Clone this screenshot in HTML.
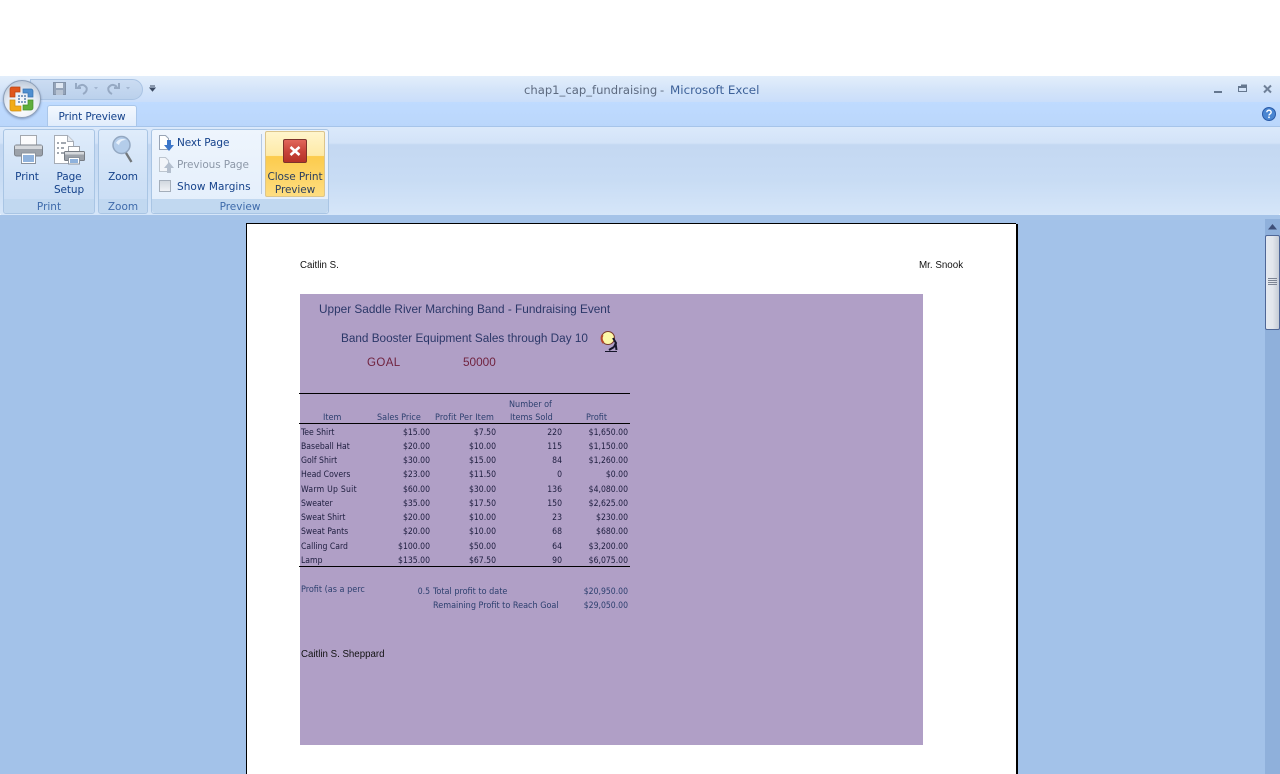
<!DOCTYPE html>
<html><head><meta charset="utf-8">
<style>
html,body{margin:0;padding:0;background:#fff;}
#r{position:relative;width:1280px;height:774px;overflow:hidden;background:#fff;font-family:"DejaVu Sans","Liberation Sans",sans-serif;}
#r div,#r svg{position:absolute;}
.t{white-space:nowrap;line-height:14px;}
.rb{font-size:10.5px;color:#15428b;letter-spacing:-.1px;text-align:center;line-height:13px;}
.gl{top:199px;height:14px;background:#c1d8f0;border-radius:0 0 3px 3px;font-size:10.5px;line-height:16px;color:#3e6aaa;text-align:center;}
.grp{top:129px;height:85px;border:1px solid #a9c5e4;border-radius:3px;background:linear-gradient(#dfecfb,#cfe1f6 60%,#c8dcf4);box-sizing:border-box;}
.c{font-family:"DejaVu Sans Condensed","DejaVu Sans",sans-serif;font-size:8.6px;color:#1d1d3e;height:12px;line-height:12px;white-space:nowrap;}
.n{text-align:right;width:70px;}
.h{color:#2c3f6e;font-size:9px;}
.n.h{font-size:8.6px;}
.a{font-family:"Liberation Sans",sans-serif;white-space:nowrap;}
</style></head><body><div id="r">

<!-- title bar -->
<div style="left:0;top:76px;width:1280px;height:26px;background:linear-gradient(#e3eefb,#d5e5f9 50%,#cadefa);"></div>
<div style="left:30px;top:79px;width:113px;height:21px;border-radius:0 11px 11px 0;background:linear-gradient(#cbdcf2,#bbd1ec);border:1px solid #a9c3e3;box-sizing:border-box;"></div>
<div class="t" style="left:524px;top:83px;font-size:11.6px;color:#5d6a80;">chap1_cap_fundraising</div>
<div class="t" style="left:660px;top:83px;font-size:11.6px;color:#5d6a80;">-</div>
<div class="t" style="left:670px;top:83px;font-size:11.9px;color:#3d6199;">Microsoft Excel</div>

<!-- QAT icons -->
<svg style="left:50px;top:80px" width="110" height="18" viewBox="0 0 110 18">
<rect x="3.500" y="2.500" width="12" height="12" fill="#94a3b8" stroke="#8292a8"/><rect x="6" y="3" width="7" height="5" fill="#dfe7f2"/><rect x="6" y="10" width="7" height="5" fill="#b7c3d3"/>
<path d="M33 14c4-2 5-6 2-8-2-2-5-1-7 1M26 3v5h5" fill="none" stroke="#96a9c3" stroke-width="2"/>
<path d="M44 7l4 0-2 2.500z" fill="#a3b6d0"/>
<path d="M62 14c-4-2-5-6-2-8 2-2 5-1 7 1M69 3v5h-5" fill="none" stroke="#96a9c3" stroke-width="2"/>
<path d="M76 7l4 0-2 2.500z" fill="#a3b6d0"/>
<path d="M100 6h5M100 8l5 0-2.500 3z" fill="#3b4a63" stroke="#3b4a63" stroke-width="1"/>
</svg>

<!-- window controls -->
<svg style="left:1205px;top:80px" width="75" height="18" viewBox="0 0 75 18">
<rect x="9" y="11" width="8" height="2" fill="#65778f"/>
<rect x="33.500" y="6.500" width="8" height="5" fill="none" stroke="#65778f"/><rect x="34" y="6" width="8" height="2" fill="#65778f"/><rect x="36" y="4.500" width="6" height="1.500" fill="#65778f"/>
<path d="M59 5.500l7 7M66 5.500l-7 7" stroke="#6f8098" stroke-width="2"/>
</svg>

<!-- tab strip -->
<div style="left:0;top:102px;width:1280px;height:25px;background:linear-gradient(#bfdbff,#bad6fb);"></div>
<div style="left:47px;top:105px;width:90px;height:23px;background:linear-gradient(#f3f8fe,#dfebfb);border:1px solid #a9c6ea;border-bottom:none;border-radius:3px 3px 0 0;box-sizing:border-box;"></div>
<div class="t rb" style="left:47px;top:109px;width:90px;color:#15428b;line-height:15px;padding-top:1px;">Print Preview</div>
<svg style="left:1262px;top:107px" width="14" height="14" viewBox="0 0 14 14"><circle cx="7" cy="7" r="6.500" fill="#4a86d2" stroke="#2a5ba8"/><path d="M4.800 5.200c0-2.600 4.400-2.600 4.400 0 0 1.700-2.200 1.700-2.200 3.300" fill="none" stroke="#fff" stroke-width="1.400"/><rect x="6.200" y="9.500" width="1.600" height="1.600" fill="#fff"/></svg>

<!-- ribbon body -->
<div style="left:0;top:126px;width:1280px;height:90px;background:linear-gradient(#dbe9fb 0,#d3e3f8 18%,#c4d8f2 20%,#c8dcf4 60%,#d6e6f9 100%);border-top:1px solid #a6c4ea;border-radius:0 0 3px 3px;box-sizing:border-box;"></div>
<div style="left:0;top:215px;width:1280px;height:5px;background:#a5c3e8;"></div>

<div class="grp" style="left:3px;width:92px;"></div><div class="gl" style="left:4px;width:90px;">Print</div>
<div class="grp" style="left:98px;width:50px;"></div><div class="gl" style="left:99px;width:48px;">Zoom</div>
<div class="grp" style="left:151px;width:178px;background:linear-gradient(#eef5fd,#e3eefb);"></div><div class="gl" style="left:152px;width:176px;">Preview</div>

<!-- print icon -->
<svg style="left:13px;top:133px" width="32" height="32" viewBox="0 0 32 32">
<rect x="7.500" y="2.500" width="16" height="10" fill="#fbfbfc" stroke="#a2a7ae"/>
<rect x="1.500" y="12" width="28" height="11" rx="2" fill="#9ca2aa" stroke="#7d838b"/>
<rect x="2" y="12.500" width="27" height="3.500" fill="#d5d8dc"/>
<rect x="8.500" y="20" width="14" height="10.500" fill="#fff" stroke="#8c949e"/>
<rect x="10" y="22" width="11" height="7" fill="#8fb2dc"/>
</svg>
<!-- page setup icon -->
<svg style="left:53px;top:133px" width="34" height="32" viewBox="0 0 34 32">
<path d="M1.500 2.500h13l6 6v22h-19z" fill="#fff" stroke="#a6acb5"/>
<path d="M14.500 2.500v6h6" fill="#e5e9ee" stroke="#a6acb5"/>
<path d="M4 10h2M4 15h2M4 20h2M8 10h5M8 15h3M8 20h3" stroke="#6a7380" stroke-width="1.300"/>
<rect x="15.500" y="13.500" width="11" height="6" fill="#fff" stroke="#9aa0a8"/>
<rect x="11.500" y="18.500" width="20" height="9" rx="1" fill="#9ca2aa" stroke="#767c84"/>
<rect x="12" y="19" width="19" height="2.500" fill="#d5d8dc"/>
<rect x="15.500" y="24.500" width="11" height="6.500" fill="#fff" stroke="#8c949e"/><rect x="17" y="26" width="8" height="4" fill="#8fb2dc"/>
</svg>
<!-- zoom icon -->
<svg style="left:108px;top:133px" width="30" height="32" viewBox="0 0 30 32">
<circle cx="13.500" cy="12" r="8.500" fill="#b4cdea" stroke="#93a8c2" stroke-width="1.500"/>
<path d="M8 10c2-4 7-5 10-3-3 0-6 1-7 5z" fill="#e8f1fb"/>
<path d="M18 20l5.500 9" stroke="#72777a" stroke-width="2.300"/>
</svg>

<div class="t rb" style="left:7px;top:171px;width:40px;">Print</div>
<div class="rb" style="left:49px;top:171px;width:40px;">Page<br>Setup</div>
<div class="t rb" style="left:102px;top:171px;width:42px;">Zoom</div>

<!-- preview small buttons -->
<svg style="left:157px;top:134px" width="18" height="18" viewBox="0 0 18 18"><path d="M2.500 1.500h6l3 3v11h-9z" fill="#fff" stroke="#98a4b5"/><path d="M10 6h4v5h3l-5 6-5-6h3z" fill="#3c76c9"/></svg>
<svg style="left:157px;top:156px" width="18" height="18" viewBox="0 0 18 18"><path d="M2.500 1.500h6l3 3v11h-9z" fill="#f2f5f9" stroke="#bcc5cf"/><path d="M12 6l5 6h-3v5h-4v-5H7z" fill="#b4bfce"/></svg>
<div style="left:159px;top:180px;width:12px;height:12px;box-sizing:border-box;background:linear-gradient(#d2d8df,#f0f2f5);border:1px solid #a4aeba;"></div>
<div class="t rb" style="left:177px;top:137px;">Next Page</div>
<div class="t rb" style="left:177px;top:159px;color:#8d98a8;">Previous Page</div>
<div class="t rb" style="left:177px;top:181px;letter-spacing:.05px;">Show Margins</div>
<div style="left:261px;top:134px;width:1px;height:60px;background:#b5c9e2;"></div>

<!-- close button -->
<div style="left:265px;top:131px;width:60px;height:66px;box-sizing:border-box;border:1px solid #dcc58c;border-radius:2px;background:linear-gradient(#fff5cc 0,#feeaa6 37%,#fccb4c 38%,#fedd80 100%);"></div>
<div style="left:283px;top:139px;width:24px;height:24px;box-sizing:border-box;border:1px solid #7d332b;border-radius:2px;background:linear-gradient(#e1665a 0,#c9453a 50%,#b53227 100%);"></div>
<svg style="left:283px;top:139px" width="24" height="24" viewBox="0 0 24 24"><path d="M7.500 8l9 8M16.500 8l-9 8" stroke="#fff" stroke-width="2.600"/></svg>
<div class="rb" style="left:265px;top:171px;width:60px;color:#2b3f5f;">Close Print<br>Preview</div>

<!-- workspace -->
<div style="left:0;top:220px;width:1280px;height:554px;background:#a3c2e9;"></div>
<div style="left:246px;top:223px;width:770px;height:560px;background:#fff;border:1px solid #000;border-right:none;box-sizing:border-box;"></div>
<div style="left:1016px;top:224px;width:2px;height:550px;background:#000;"></div>

<!-- scrollbar -->
<div style="left:1265px;top:219px;width:15px;height:555px;background:#8fb0db;"></div>
<svg style="left:1265px;top:220px" width="15" height="16" viewBox="0 0 15 16"><path d="M3 9.500l4.500-5.500 4.500 5.500z" fill="#3f4f78"/></svg>
<div style="left:1265px;top:235px;width:15px;height:95px;box-sizing:border-box;border:1px solid #4f6797;border-radius:2px;background:linear-gradient(90deg,#e5e9f0,#e2e6ec 50%,#c6ccd6);"></div>
<svg style="left:1265px;top:277px" width="15" height="10" viewBox="0 0 15 10"><path d="M3 1.500h9M3 3.500h9M3 5.500h9M3 7.500h9" stroke="#7c8493" stroke-width="1"/></svg>

<!-- page content -->
<div class="a t" style="left:300px;top:259px;font-size:9.700px;color:#111;">Caitlin S.</div>
<div class="a t" style="left:919px;top:259px;font-size:9.800px;color:#111;">Mr. Snook</div>
<div style="left:300px;top:294px;width:623px;height:451px;background:#b09fc6;"></div>

<div class="a t" style="left:319px;top:302px;font-size:11.800px;color:#2b3768;">Upper Saddle River Marching Band - Fundraising Event</div>
<div class="a t" style="left:341px;top:332px;font-size:11.750px;color:#2b3768;">Band Booster Equipment Sales through Day 10</div>
<div class="a t" style="left:367px;top:356px;font-size:11.500px;letter-spacing:.4px;color:#70233f;">GOAL</div>
<div class="a t" style="left:463px;top:355px;font-size:11.800px;color:#70233f;">50000</div>
<svg style="left:599px;top:329px" width="21" height="24" viewBox="0 0 21 24">
<circle cx="9" cy="9" r="6.500" fill="#fdf8a8" stroke="#7a3b2c"/><path d="M3.500 6a7 7 0 0 0 1 8" fill="none" stroke="#b5482e" stroke-width="2.200"/>
<path d="M14 9l3 5-2 4M16.500 14l1 7M15 18l-5 3" stroke="#16162a" stroke-width="2" fill="none"/>
<path d="M6 22.500h12" stroke="#16162a" stroke-width="1"/>
</svg>

<div style="left:299px;top:393px;width:331px;height:1px;background:#000;"></div>
<div style="left:299px;top:423px;width:331px;height:1px;background:#000;"></div>
<div style="left:299px;top:566px;width:331px;height:1px;background:#000;"></div>

<div class="c h" style="left:323px;top:412px;">Item</div>
<div class="c h" style="left:377px;top:412px;">Sales Price</div>
<div class="c h" style="left:435px;top:412px;letter-spacing:.1px;">Profit Per Item</div>
<div class="c h" style="left:509px;top:399px;">Number of</div>
<div class="c h" style="left:510px;top:412px;">Items Sold</div>
<div class="c h" style="left:586px;top:412px;">Profit</div>

<div class="c" style="left:301px;top:427px;">Tee Shirt</div><div class="c n" style="left:360px;top:427px;">$15.00</div><div class="c n" style="left:426px;top:427px;">$7.50</div><div class="c n" style="left:492px;top:427px;">220</div><div class="c n" style="left:558px;top:427px;">$1,650.00</div>
<div class="c" style="left:301px;top:441px;">Baseball Hat</div><div class="c n" style="left:360px;top:441px;">$20.00</div><div class="c n" style="left:426px;top:441px;">$10.00</div><div class="c n" style="left:492px;top:441px;">115</div><div class="c n" style="left:558px;top:441px;">$1,150.00</div>
<div class="c" style="left:301px;top:455px;">Golf Shirt</div><div class="c n" style="left:360px;top:455px;">$30.00</div><div class="c n" style="left:426px;top:455px;">$15.00</div><div class="c n" style="left:492px;top:455px;">84</div><div class="c n" style="left:558px;top:455px;">$1,260.00</div>
<div class="c" style="left:301px;top:469px;">Head Covers</div><div class="c n" style="left:360px;top:469px;">$23.00</div><div class="c n" style="left:426px;top:469px;">$11.50</div><div class="c n" style="left:492px;top:469px;">0</div><div class="c n" style="left:558px;top:469px;">$0.00</div>
<div class="c" style="left:301px;top:484px;letter-spacing:.25px;">Warm Up Suit</div><div class="c n" style="left:360px;top:484px;">$60.00</div><div class="c n" style="left:426px;top:484px;">$30.00</div><div class="c n" style="left:492px;top:484px;">136</div><div class="c n" style="left:558px;top:484px;">$4,080.00</div>
<div class="c" style="left:301px;top:498px;">Sweater</div><div class="c n" style="left:360px;top:498px;">$35.00</div><div class="c n" style="left:426px;top:498px;">$17.50</div><div class="c n" style="left:492px;top:498px;">150</div><div class="c n" style="left:558px;top:498px;">$2,625.00</div>
<div class="c" style="left:301px;top:512px;">Sweat Shirt</div><div class="c n" style="left:360px;top:512px;">$20.00</div><div class="c n" style="left:426px;top:512px;">$10.00</div><div class="c n" style="left:492px;top:512px;">23</div><div class="c n" style="left:558px;top:512px;">$230.00</div>
<div class="c" style="left:301px;top:526px;">Sweat Pants</div><div class="c n" style="left:360px;top:526px;">$20.00</div><div class="c n" style="left:426px;top:526px;">$10.00</div><div class="c n" style="left:492px;top:526px;">68</div><div class="c n" style="left:558px;top:526px;">$680.00</div>
<div class="c" style="left:301px;top:541px;">Calling Card</div><div class="c n" style="left:360px;top:541px;">$100.00</div><div class="c n" style="left:426px;top:541px;">$50.00</div><div class="c n" style="left:492px;top:541px;">64</div><div class="c n" style="left:558px;top:541px;">$3,200.00</div>
<div class="c" style="left:301px;top:555px;">Lamp</div><div class="c n" style="left:360px;top:555px;">$135.00</div><div class="c n" style="left:426px;top:555px;">$67.50</div><div class="c n" style="left:492px;top:555px;">90</div><div class="c n" style="left:558px;top:555px;">$6,075.00</div>

<div class="c h" style="left:301px;top:584px;">Profit (as a perc</div>
<div class="c h n" style="left:360px;top:586px;">0.5</div>
<div class="c h" style="left:433px;top:586px;">Total profit to date</div>
<div class="c h n" style="left:558px;top:586px;">$20,950.00</div>
<div class="c h" style="left:433px;top:600px;">Remaining Profit to Reach Goal</div>
<div class="c h n" style="left:558px;top:600px;">$29,050.00</div>
<div class="a t" style="left:301px;top:648px;font-size:9.700px;color:#111;">Caitlin S. Sheppard</div>

<!-- office button -->
<div style="left:3px;top:80px;width:38px;height:38px;border-radius:50%;border:1px solid #8d9fb8;box-sizing:border-box;background:radial-gradient(circle at 50% 75%,#ffffff 0,#e6ecf5 50%,#aab9cc 100%);box-shadow:0 1px 2px rgba(70,90,130,.5);"></div>
<svg style="left:9px;top:86px" width="26" height="26" viewBox="0 0 26 26">
<path d="M3 1h8v5H6v5H1V3a2 2 0 0 1 2-2z" fill="#e0561b" stroke="#b8430f" stroke-width=".7"/>
<path d="M14 3h8a2 2 0 0 1 2 2v6h-5V7h-5z" fill="#4f8fd0" stroke="#3672b0" stroke-width=".7"/>
<path d="M1 14h5v6h6v5H3a2 2 0 0 1-2-2z" fill="#f2ac18" stroke="#cf8c10" stroke-width=".7"/>
<path d="M19 14h5v8a2 2 0 0 1-2 2h-8v-5h5z" fill="#5fae3c" stroke="#438f2a" stroke-width=".7"/>
<path d="M9 9h2v2H9zM12 9h2v2h-2zM15 9h2v2h-2zM9 12h2v2H9zM15 12h2v2h-2zM9 15h2v2H9zM12 15h2v2h-2zM15 15h2v2h-2z" fill="#7f9cc0"/>
</svg>
</div></body></html>
